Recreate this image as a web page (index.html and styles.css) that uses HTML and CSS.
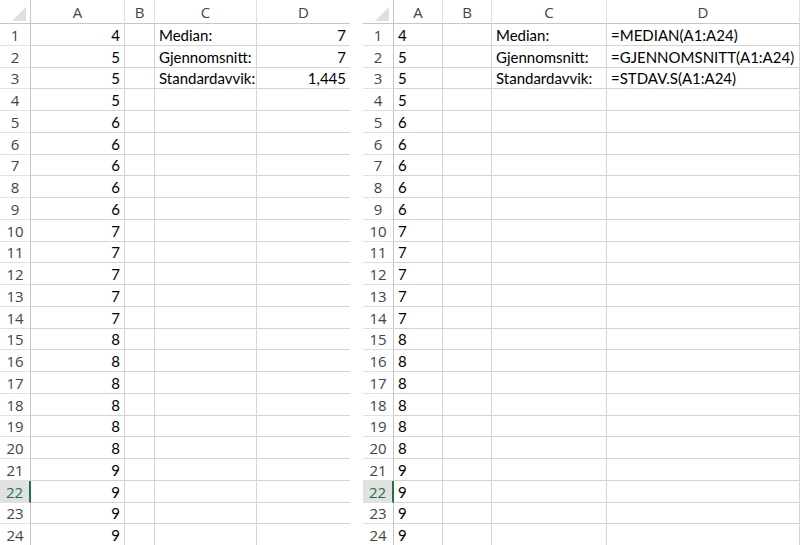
FILE: index.html
```html
<!DOCTYPE html>
<html lang="no">
<head>
<meta charset="utf-8">
<title>Median og standardavvik</title>
<link rel="stylesheet" href="styles.css">
</head>
<body>
<div class="page">
  <div class="sheet sheet-left">
    <div class="hd corner"><span class="tri"></span></div><div class="hd col">A</div><div class="hd col">B</div><div class="hd col">C</div><div class="hd col">D</div>
    <div class="rh">1</div><div class="c n">4</div><div class="c"></div><div class="c">Median:</div><div class="c n">7</div>
    <div class="rh">2</div><div class="c n">5</div><div class="c"></div><div class="c">Gjennomsnitt:</div><div class="c n">7</div>
    <div class="rh">3</div><div class="c n">5</div><div class="c"></div><div class="c">Standardavvik:</div><div class="c n">1,445</div>
    <div class="rh">4</div><div class="c n">5</div><div class="c"></div><div class="c"></div><div class="c"></div>
    <div class="rh">5</div><div class="c n">6</div><div class="c"></div><div class="c"></div><div class="c"></div>
    <div class="rh">6</div><div class="c n">6</div><div class="c"></div><div class="c"></div><div class="c"></div>
    <div class="rh">7</div><div class="c n">6</div><div class="c"></div><div class="c"></div><div class="c"></div>
    <div class="rh">8</div><div class="c n">6</div><div class="c"></div><div class="c"></div><div class="c"></div>
    <div class="rh">9</div><div class="c n">6</div><div class="c"></div><div class="c"></div><div class="c"></div>
    <div class="rh">10</div><div class="c n">7</div><div class="c"></div><div class="c"></div><div class="c"></div>
    <div class="rh">11</div><div class="c n">7</div><div class="c"></div><div class="c"></div><div class="c"></div>
    <div class="rh">12</div><div class="c n">7</div><div class="c"></div><div class="c"></div><div class="c"></div>
    <div class="rh">13</div><div class="c n">7</div><div class="c"></div><div class="c"></div><div class="c"></div>
    <div class="rh">14</div><div class="c n">7</div><div class="c"></div><div class="c"></div><div class="c"></div>
    <div class="rh">15</div><div class="c n">8</div><div class="c"></div><div class="c"></div><div class="c"></div>
    <div class="rh">16</div><div class="c n">8</div><div class="c"></div><div class="c"></div><div class="c"></div>
    <div class="rh">17</div><div class="c n">8</div><div class="c"></div><div class="c"></div><div class="c"></div>
    <div class="rh">18</div><div class="c n">8</div><div class="c"></div><div class="c"></div><div class="c"></div>
    <div class="rh">19</div><div class="c n">8</div><div class="c"></div><div class="c"></div><div class="c"></div>
    <div class="rh">20</div><div class="c n">8</div><div class="c"></div><div class="c"></div><div class="c"></div>
    <div class="rh">21</div><div class="c n">9</div><div class="c"></div><div class="c"></div><div class="c"></div>
    <div class="rh sel">22</div><div class="c n">9</div><div class="c"></div><div class="c"></div><div class="c"></div>
    <div class="rh">23</div><div class="c n">9</div><div class="c"></div><div class="c"></div><div class="c"></div>
    <div class="rh">24</div><div class="c n">9</div><div class="c"></div><div class="c"></div><div class="c"></div>
  </div>
  <div class="sheet sheet-right">
    <div class="hd corner"><span class="tri"></span></div><div class="hd col">A</div><div class="hd col">B</div><div class="hd col">C</div><div class="hd col">D</div>
    <div class="rh">1</div><div class="c">4</div><div class="c"></div><div class="c">Median:</div><div class="c">=MEDIAN(A1:A24)</div>
    <div class="rh">2</div><div class="c">5</div><div class="c"></div><div class="c">Gjennomsnitt:</div><div class="c">=GJENNOMSNITT(A1:A24)</div>
    <div class="rh">3</div><div class="c">5</div><div class="c"></div><div class="c">Standardavvik:</div><div class="c">=STDAV.S(A1:A24)</div>
    <div class="rh">4</div><div class="c">5</div><div class="c"></div><div class="c"></div><div class="c"></div>
    <div class="rh">5</div><div class="c">6</div><div class="c"></div><div class="c"></div><div class="c"></div>
    <div class="rh">6</div><div class="c">6</div><div class="c"></div><div class="c"></div><div class="c"></div>
    <div class="rh">7</div><div class="c">6</div><div class="c"></div><div class="c"></div><div class="c"></div>
    <div class="rh">8</div><div class="c">6</div><div class="c"></div><div class="c"></div><div class="c"></div>
    <div class="rh">9</div><div class="c">6</div><div class="c"></div><div class="c"></div><div class="c"></div>
    <div class="rh">10</div><div class="c">7</div><div class="c"></div><div class="c"></div><div class="c"></div>
    <div class="rh">11</div><div class="c">7</div><div class="c"></div><div class="c"></div><div class="c"></div>
    <div class="rh">12</div><div class="c">7</div><div class="c"></div><div class="c"></div><div class="c"></div>
    <div class="rh">13</div><div class="c">7</div><div class="c"></div><div class="c"></div><div class="c"></div>
    <div class="rh">14</div><div class="c">7</div><div class="c"></div><div class="c"></div><div class="c"></div>
    <div class="rh">15</div><div class="c">8</div><div class="c"></div><div class="c"></div><div class="c"></div>
    <div class="rh">16</div><div class="c">8</div><div class="c"></div><div class="c"></div><div class="c"></div>
    <div class="rh">17</div><div class="c">8</div><div class="c"></div><div class="c"></div><div class="c"></div>
    <div class="rh">18</div><div class="c">8</div><div class="c"></div><div class="c"></div><div class="c"></div>
    <div class="rh">19</div><div class="c">8</div><div class="c"></div><div class="c"></div><div class="c"></div>
    <div class="rh">20</div><div class="c">8</div><div class="c"></div><div class="c"></div><div class="c"></div>
    <div class="rh">21</div><div class="c">9</div><div class="c"></div><div class="c"></div><div class="c"></div>
    <div class="rh sel">22</div><div class="c">9</div><div class="c"></div><div class="c"></div><div class="c"></div>
    <div class="rh">23</div><div class="c">9</div><div class="c"></div><div class="c"></div><div class="c"></div>
    <div class="rh">24</div><div class="c">9</div><div class="c"></div><div class="c"></div><div class="c"></div>
  </div>
</div>
</body>
</html>
```
FILE: styles.css
```css
html, body {
  margin: 0;
  padding: 0;
  background: #ffffff;
}

.page {
  display: flex;
  width: 800px;
  height: 545px;
  overflow: hidden;
  gap: 13px;
}

.sheet {
  display: grid;
  grid-template-rows: 24px repeat(24, 21.75px);
  font-family: "Lato", "Liberation Sans", sans-serif;
  font-size: 15px;
  color: #000;
}

.sheet-left {
  grid-template-columns: 31px 94px 30px 102px 93px;
}

.sheet-left > :nth-child(5n) {
  border-right: 0;
}

.sheet-right {
  grid-template-columns: 31px 49px 49px 115px 193px;
}

.hd, .rh, .c {
  box-sizing: border-box;
  border-right: 1px solid #d4d4d4;
  border-bottom: 1px solid #d4d4d4;
  min-width: 0;
  overflow: hidden;
  white-space: nowrap;
}

.hd {
  font-family: "Open Sans", "Liberation Sans", sans-serif;
  font-size: 15px;
  line-height: 20px;
  color: #444;
  display: flex;
  align-items: flex-end;
  justify-content: center;
  padding-bottom: 1px;
  border-right-color: #e1e1e1;
  border-bottom-color: #c6c6c6;
}

.corner {
  position: relative;
  border-right-color: #c6c6c6;
}

.tri {
  position: absolute;
  right: 4px;
  bottom: 2px;
  width: 0;
  height: 0;
  border-left: 14px solid transparent;
  border-bottom: 14px solid #dfdfdf;
}

.rh {
  font-family: "Open Sans", "Liberation Sans", sans-serif;
  font-size: 15px;
  line-height: 20px;
  color: #444;
  display: flex;
  align-items: flex-end;
  justify-content: center;
  border-right-color: #c6c6c6;
  border-bottom-color: #e1e1e1;
}

.rh.sel {
  background: #e1e1e1;
  color: #217346;
  border-right: 2px solid #217346;
}

.c {
  display: flex;
  align-items: flex-end;
  padding: 0 4px 1px 4px;
}

.c.n {
  justify-content: flex-end;
}
```
